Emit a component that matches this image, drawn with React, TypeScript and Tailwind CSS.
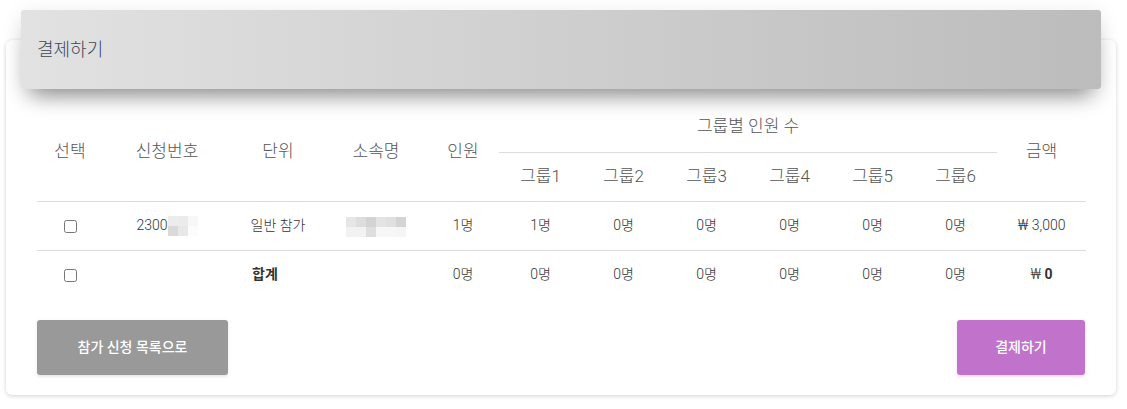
import React from "react";

const font = { fontFamily: 'Roboto, "Noto Sans CJK KR", sans-serif' };

function Pixels({ rows }: { rows: string[][] }) {
  return (
    <span className="inline-flex flex-col align-middle">
      {rows.map((r, i) => (
        <span key={i} className="flex">
          {r.map((c, j) => (
            <span key={j} className="block w-[10px] h-[10px]" style={{ backgroundColor: c }} />
          ))}
        </span>
      ))}
    </span>
  );
}

const th = "text-[17px] font-light text-[#555] text-center align-middle border-b border-[#ddd] p-0";
const td = "text-center align-middle p-0";

export default function App() {
  const groups = ["그룹1", "그룹2", "그룹3", "그룹4", "그룹5", "그룹6"];
  return (
    <div className="w-[1127px] h-[409px] bg-white pt-[40px] pl-[6px]" style={font}>
      <div className="w-[1110px] h-[355px] bg-white rounded-[6px] shadow-[0_1px_4px_0_rgba(0,0,0,0.18)] flex flex-col">
        <div className="-mt-[30px] mx-[15px] h-[79px] rounded-[3px] bg-gradient-to-r from-[#e2e2e2] to-[#bcbcbc] shadow-[0_16px_22px_-10px_rgba(0,0,0,0.42),0_4px_20px_0_rgba(0,0,0,0.1)] flex items-center px-[16px]">
          <span className="text-[18px] text-[#3c4858] font-light">결제하기</span>
        </div>
        <div className="px-[31px] pt-[13px] flex flex-col">
          <table className="w-[1049px] table-fixed border-collapse">
            <colgroup>
              <col className="w-[66px]" />
              <col className="w-[128px]" />
              <col className="w-[94px]" />
              <col className="w-[102px]" />
              <col className="w-[72px]" />
              <col className="w-[83px]" />
              <col className="w-[83px]" />
              <col className="w-[83px]" />
              <col className="w-[83px]" />
              <col className="w-[83px]" />
              <col className="w-[83px]" />
              <col className="w-[89px]" />
            </colgroup>
            <thead>
              <tr className="h-[50px]">
                {["선택", "신청번호", "단위", "소속명", "인원"].map((h) => (
                  <th key={h} rowSpan={2} className={th}>
                    {h}
                  </th>
                ))}
                <th colSpan={6} className={th}>
                  그룹별 인원 수
                </th>
                <th rowSpan={2} className={th}>
                  금액
                </th>
              </tr>
              <tr className="h-[49px]">
                {groups.map((g) => (
                  <th key={g} className={th}>
                    {g}
                  </th>
                ))}
              </tr>
            </thead>
            <tbody className="text-[14px] text-[#333] font-light">
              <tr className="h-[49px] border-b border-[#ddd]">
                <td className={td}>
                  <input type="checkbox" className="align-middle m-0" />
                </td>
                <td className={td}>
                  <span className="inline-flex items-center">
                    <span>2300</span>
                    <Pixels rows={[["#ececec", "#ebebeb", "#f7f7f7"], ["#d9d9d9", "#e8e8e8", "#fcfcfc"]]} />
                  </span>
                </td>
                <td className={td}>일반 참가</td>
                <td className={`${td} pt-[2px]`}>
                  <Pixels
                    rows={[
                      ["#e6e6e6", "#dddddd", "#d3d3d3", "#e4e4e4", "#e0e0e0", "#d4d4d4"],
                      ["#f2f2f2", "#f2f2f2", "#dedede", "#f7f7f7", "#f7f7f7", "#f5f5f5"],
                    ]}
                  />
                </td>
                <td className={td}>1명</td>
                <td className={td}>1명</td>
                <td className={td}>0명</td>
                <td className={td}>0명</td>
                <td className={td}>0명</td>
                <td className={td}>0명</td>
                <td className={td}>0명</td>
                <td className={td}>₩ 3,000</td>
              </tr>
              <tr className="h-[48px]">
                <td className={td}>
                  <input type="checkbox" className="align-middle m-0" />
                </td>
                <td colSpan={3} className={`${td} font-bold`}>
                  합계
                </td>
                <td className={td}>0명</td>
                <td className={td}>0명</td>
                <td className={td}>0명</td>
                <td className={td}>0명</td>
                <td className={td}>0명</td>
                <td className={td}>0명</td>
                <td className={td}>0명</td>
                <td className={td}>
                  ₩ <span className="font-bold">0</span>
                </td>
              </tr>
            </tbody>
          </table>
          <div className="flex justify-between mt-[22px]">
            <button className="w-[191px] h-[55px] rounded-[3px] bg-[#999999] text-white text-[14px] font-medium shadow-[0_2px_2px_0_rgba(153,153,153,0.14),0_1px_5px_0_rgba(153,153,153,0.12)]">
              참가 신청 목록으로
            </button>
            <button className="w-[128px] h-[55px] rounded-[3px] bg-[#c172ca] text-white text-[14px] font-medium shadow-[0_2px_2px_0_rgba(193,114,202,0.14),0_1px_5px_0_rgba(193,114,202,0.12)]">
              결제하기
            </button>
          </div>
        </div>
      </div>
    </div>
  );
}
